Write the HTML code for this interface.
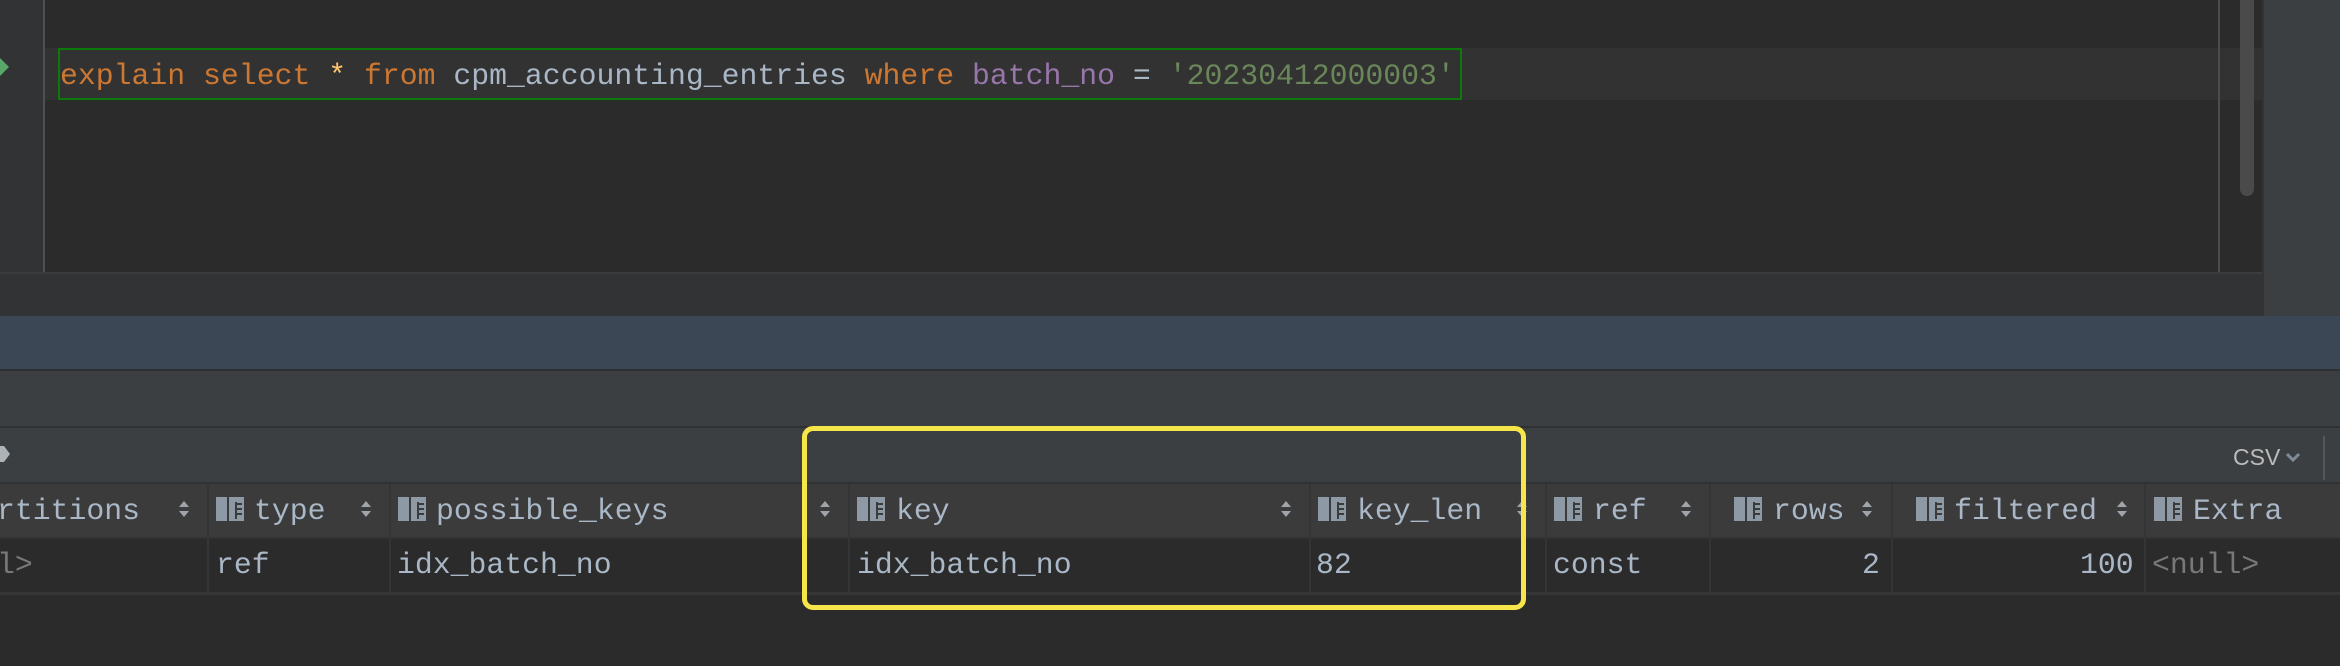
<!DOCTYPE html>
<html><head><meta charset="utf-8"><style>
*{margin:0;padding:0;box-sizing:border-box}
body{width:2340px;height:666px;background:#2b2b2b;position:relative;overflow:hidden;font-family:"Liberation Mono","DejaVu Sans Mono",monospace}
.a{position:absolute}
.m{font-size:29.8px;white-space:pre;line-height:1}
.t{color:#a9b7c6}
.k{color:#cc7832}
.ic{position:absolute;top:497px;width:28px;height:24px}
.so{position:absolute;top:501px;width:12px;height:16px}
.v{position:absolute;top:484px;width:2px;height:108px;background:#333536}
</style></head><body>
<!-- editor -->
<div class="a" style="left:0;top:0;width:43px;height:272px;background:#313335"></div>
<div class="a" style="left:43px;top:0;width:2px;height:272px;background:#4e5052"></div>
<div class="a" style="left:45px;top:48px;width:2217px;height:52px;background:#323232"></div>
<div class="a" style="left:2218px;top:0;width:2px;height:272px;background:#4a4c4e"></div>
<div class="a" style="left:2240px;top:0;width:14px;height:196px;background:#4a4a4a;border-radius:0 0 7px 7px"></div>
<svg class="a" style="left:0;top:58px" width="10" height="18"><path d="M0 0 L9 9 L0 18 Z" fill="#59a869"/></svg>
<div class="a" style="left:58px;top:48px;width:1404px;height:52px;border:2px solid #0b7a0b"></div>
<div class="a m" style="left:60px;top:62px"><span class="k">explain select </span><span style="color:#ffc66d">*</span><span class="k"> from </span><span class="t">cpm_accounting_entries </span><span class="k">where </span><span style="color:#9876aa">batch_no</span><span class="t"> = </span><span style="color:#6a8759">'20230412000003'</span></div>
<div class="a" style="left:0;top:272px;width:2262px;height:44px;background:#313335;border-top:2px solid #3a3c3e"></div>
<div class="a" style="left:2262px;top:0;width:78px;height:316px;background:#3c3f41;border-left:2px solid #333"></div>
<!-- blue bar -->
<div class="a" style="left:0;top:316px;width:2340px;height:53px;background:#3b4754"></div>
<div class="a" style="left:0;top:369px;width:2340px;height:2px;background:#2e3032"></div>
<div class="a" style="left:0;top:371px;width:2340px;height:55px;background:#3c3f41"></div>
<div class="a" style="left:0;top:426px;width:2340px;height:2px;background:#2f3133"></div>
<div class="a" style="left:0;top:428px;width:2340px;height:55px;background:#3c3f41"></div>
<svg class="a" style="left:0;top:446px" width="12" height="20"><path d="M0 0 H4 L10 8 L4 16 H0 Z" fill="#aeb3b8"/></svg>
<div class="a" style="left:2233px;top:444px;font-family:'Liberation Sans',sans-serif;font-size:23px;color:#bbbbbb">CSV</div>
<svg class="a" style="left:2285px;top:452px" width="16" height="12"><path d="M2 2 L8 8 L14 2" stroke="#7f8b96" stroke-width="3" fill="none"/></svg>
<div class="a" style="left:2323px;top:436px;width:2px;height:44px;background:#55585a"></div>
<div class="a" style="left:0;top:482px;width:2340px;height:2px;background:#2f3133"></div>
<!-- header -->
<div class="a" style="left:0;top:484px;width:2340px;height:53px;background:#3b3b3b"></div>
<div class="a" style="left:0;top:537px;width:2340px;height:2px;background:#323232"></div>
<div class="a" style="left:0;top:539px;width:2340px;height:53px;background:#2b2b2b"></div>
<div class="a" style="left:0;top:592px;width:2340px;height:3px;background:#353535"></div>
<div class="v" style="left:207px"></div><div class="v" style="left:389px"></div><div class="v" style="left:848px"></div><div class="v" style="left:1309px"></div><div class="v" style="left:1545px"></div><div class="v" style="left:1709px"></div><div class="v" style="left:1891px"></div><div class="v" style="left:2144px"></div>
<svg width="0" height="0" style="position:absolute"><defs>
<g id="i"><rect x="0" y="0" width="11" height="24" fill="#8d9aa5"/><rect x="13" y="0" width="15" height="24" fill="#8d9aa5"/><path d="M19 7 H26 M19 12 H26 M19 17 H26 M20 5 V22" stroke="#3b3b3b" stroke-width="2"/></g>
<g id="s"><path d="M6 0 L11 6 H1 Z M6 16 L11 10 H1 Z" fill="#9ea4aa"/></g>
</defs></svg>
<svg class="ic" style="left:216px"><use href="#i"/></svg>
<svg class="ic" style="left:398px"><use href="#i"/></svg>
<svg class="ic" style="left:857px"><use href="#i"/></svg>
<svg class="ic" style="left:1318px"><use href="#i"/></svg>
<svg class="ic" style="left:1554px"><use href="#i"/></svg>
<svg class="ic" style="left:1734px"><use href="#i"/></svg>
<svg class="ic" style="left:1916px"><use href="#i"/></svg>
<svg class="ic" style="left:2154px"><use href="#i"/></svg>
<svg class="so" style="left:178px"><use href="#s"/></svg>
<svg class="so" style="left:360px"><use href="#s"/></svg>
<svg class="so" style="left:819px"><use href="#s"/></svg>
<svg class="so" style="left:1280px"><use href="#s"/></svg>
<svg class="so" style="left:1516px"><use href="#s"/></svg>
<svg class="so" style="left:1680px"><use href="#s"/></svg>
<svg class="so" style="left:1861px"><use href="#s"/></svg>
<svg class="so" style="left:2116px"><use href="#s"/></svg>
<div class="a m t" style="left:-3px;top:497px">rtitions</div>
<div class="a m t" style="left:254px;top:497px">type</div>
<div class="a m t" style="left:436px;top:497px">possible_keys</div>
<div class="a m t" style="left:896px;top:497px">key</div>
<div class="a m t" style="left:1357px;top:497px">key_len</div>
<div class="a m t" style="left:1593px;top:497px">ref</div>
<div class="a m t" style="left:1773px;top:497px">rows</div>
<div class="a m t" style="left:1954px;top:497px">filtered</div>
<div class="a m t" style="left:2193px;top:497px">Extra</div>
<!-- data -->
<div class="a m" style="left:-3px;top:551px;color:#787878">l&gt;</div>
<div class="a m t" style="left:216px;top:551px">ref</div>
<div class="a m t" style="left:397px;top:551px">idx_batch_no</div>
<div class="a m t" style="left:857px;top:551px">idx_batch_no</div>
<div class="a m t" style="left:1316px;top:551px">82</div>
<div class="a m t" style="left:1553px;top:551px">const</div>
<div class="a m t" style="left:1862px;top:551px">2</div>
<div class="a m t" style="left:2080px;top:551px">100</div>
<div class="a m" style="left:2152px;top:551px;color:#787878">&lt;null&gt;</div>
<!-- yellow box -->
<div class="a" style="left:802px;top:426px;width:724px;height:184px;border:5px solid #f7e649;border-radius:11px"></div>
</body></html>
